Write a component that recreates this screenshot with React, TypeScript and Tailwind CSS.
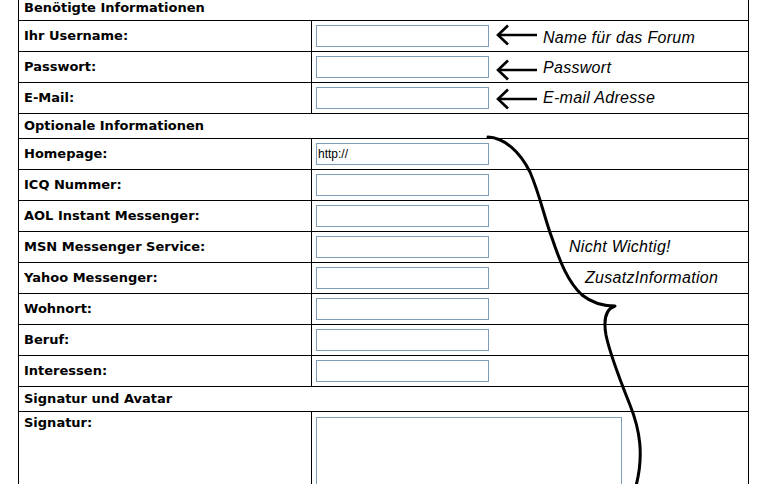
import type { ReactNode } from "react";

type Field = {
  label: string;
  value?: string;
  note?: ReactNode;
};

const required: Field[] = [
  { label: "Ihr Username:", note: <Pointer text="Name für das Forum" arrowClass="mb-[2px]" textClass="mt-[3px]" /> },
  { label: "Passwort:", note: <Pointer text="Passwort" arrowClass="mt-[5px]" textClass="mt-[2px]" /> },
  { label: "E-Mail:", note: <Pointer text="E-mail Adresse" arrowClass="mt-[2px]" textClass="ml-[3px]" /> },
];

const optional: Field[] = [
  { label: "Homepage:", value: "http://" },
  { label: "ICQ Nummer:" },
  { label: "AOL Instant Messenger:" },
  { label: "MSN Messenger Service:", note: <Note text="Nicht Wichtig!" className="ml-[80px]" /> },
  { label: "Yahoo Messenger:", note: <Note text="ZusatzInformation" className="ml-[96px]" /> },
  { label: "Wohnort:" },
  { label: "Beruf:" },
  { label: "Interessen:" },
];

const noteFont = "font-['Liberation_Sans',Arial,sans-serif] text-[16px] leading-[18px] font-normal italic tracking-[0.3px] text-black";

function Note({ text, className = "" }: { text: string; className?: string }) {
  return <span className={`${noteFont} ${className}`}>{text}</span>;
}

// Hand-drawn arrow pointing back at the input
function Pointer({ text, arrowClass = "", textClass = "" }: { text: string; arrowClass?: string; textClass?: string }) {
  return (
    <>
      <svg width="42" height="22" viewBox="0 0 42 22" className={`ml-[7px] shrink-0 ${arrowClass}`}>
        <path d="M2 11 H41" stroke="black" strokeWidth="2.6" fill="none" />
        <path d="M12 1.5 L2 11 L12 20.5" stroke="black" strokeWidth="2.6" fill="none" strokeLinejoin="miter" />
      </svg>
      <span className={`ml-[5px] ${noteFont} ${textClass}`}>{text}</span>
    </>
  );
}

function Header({ title }: { title: string }) {
  return <div className="flex h-[25px] items-center border-b border-black pl-[5px]">{title}</div>;
}

function Row({ field }: { field: Field }) {
  return (
    <div className="flex h-[31px] border-b border-black">
      <div className="flex w-[293px] shrink-0 items-center border-r border-black pl-[5px]">{field.label}</div>
      <div className="flex flex-1 items-center pl-[4px]">
        <input
          type="text"
          defaultValue={field.value}
          className="h-[22px] w-[173px] shrink-0 border border-[#7f9db9] bg-white px-[1px] font-['Liberation_Sans',Arial,sans-serif] text-[12px] font-normal text-black outline-none"
        />
        {field.note}
      </div>
    </div>
  );
}

export default function App() {
  return (
    <div className="relative h-[484px] overflow-hidden bg-white">
      <div className="-mt-[4px] ml-[18px] w-[731px] border-x border-black font-['DejaVu_Sans',Verdana,sans-serif] text-[13px] font-bold text-black">
        <Header title="Benötigte Informationen" />
        {required.map((f) => (
          <Row key={f.label} field={f} />
        ))}
        <Header title="Optionale Informationen" />
        {optional.map((f) => (
          <Row key={f.label} field={f} />
        ))}
        <Header title="Signatur und Avatar" />
        <div className="flex h-[110px]">
          <div className="w-[293px] shrink-0 border-r border-black pl-[5px] pt-[3px] leading-[16px]">Signatur:</div>
          <div className="flex-1 pl-[4px] pt-[5px]">
            <textarea className="block h-[100px] w-[306px] resize-none border border-[#7f9db9] bg-white outline-none" />
          </div>
        </div>
      </div>

      {/* Curly brace grouping the optional fields */}
      <svg width="769" height="484" viewBox="0 0 769 484" className="pointer-events-none absolute left-0 top-0">
        <path
          d="M488 137 C505 138 520 152 530 172 C540 195 545 220 552 238 C560 262 568 282 582 295 C592 303 603 306 615 306 C606 309 603 318 606 335 C610 355 620 380 630 405 C640 430 644 455 636 486"
          stroke="black"
          strokeWidth="3"
          fill="none"
          strokeLinecap="round"
          strokeLinejoin="round"
        />
      </svg>
    </div>
  );
}
